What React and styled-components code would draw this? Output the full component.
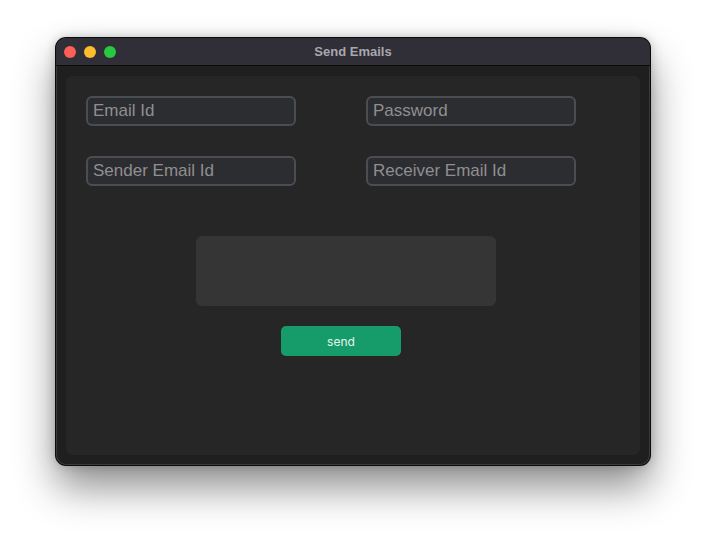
import React from "react";
import styled, { createGlobalStyle } from "styled-components";

const Global = createGlobalStyle`
  html, body { margin: 0; padding: 0; background: #ffffff; }
  body { font-family: "Liberation Sans", Arial, sans-serif; }
`;

const Page = styled.div`
  width: 706px;
  height: 539px;
  display: flex;
  justify-content: center;
  align-items: flex-start;
  padding-top: 38px;
  box-sizing: border-box;
`;

const Window = styled.div`
  width: 594px;
  height: 427px;
  border-radius: 10px;
  background: #1f1f1f;
  box-shadow: 0 0 0 1px #0a0a0a, inset 0 0 0 1px #3a3a3c, 0 22px 40px rgba(0, 0, 0, 0.45),
    0 0 12px rgba(0, 0, 0, 0.25);
  overflow: hidden;
  display: flex;
  flex-direction: column;
  box-sizing: border-box;
`;

const TitleBar = styled.div`
  height: 27px;
  flex: none;
  background: #302e36;
  border-bottom: 1px solid #0c0c0c;
  display: flex;
  align-items: center;
  position: relative;
  padding-left: 8px;
  gap: 8px;
`;

const Light = styled.span`
  width: 12px;
  height: 12px;
  border-radius: 50%;
  background: ${(p) => p.$c};
`;

const Title = styled.div`
  position: absolute;
  left: 0;
  right: 0;
  text-align: center;
  font-family: "Liberation Sans", Arial, sans-serif;
  font-weight: bold;
  font-size: 13px;
  color: #a8a7ad;
  pointer-events: none;
`;

const Body = styled.div`
  flex: 1;
  padding: 10px;
  display: flex;
`;

const Panel = styled.div`
  flex: 1;
  background: #262626;
  border-radius: 6px;
  padding: 20px;
  box-sizing: border-box;
  display: flex;
  flex-direction: column;
  align-items: flex-start;
`;

const Grid = styled.div`
  display: grid;
  grid-template-columns: 210px 210px;
  column-gap: 70px;
  row-gap: 30px;
`;

const Input = styled.div`
  height: 30px;
  box-sizing: border-box;
  border: 2px solid #4a4d51;
  border-radius: 6px;
  background: #2c2d30;
  color: #8f8f91;
  font-family: "Liberation Sans", Arial, sans-serif;
  font-size: 17px;
  display: flex;
  align-items: center;
  padding-left: 5px;
`;

const TextArea = styled.div`
  width: 300px;
  height: 70px;
  margin-top: 50px;
  margin-left: 110px;
  background: #353535;
  border-radius: 6px;
`;

const Button = styled.button`
  width: 120px;
  height: 30px;
  margin-top: 20px;
  margin-left: 195px;
  border: none;
  border-radius: 5px;
  background: #159c6a;
  color: #e6f3ee;
  font-family: "Inter", "Liberation Sans", sans-serif;
  font-size: 12px;
  padding: 0;
  cursor: pointer;
`;

export default function App() {
  return (
    <>
      <Global />
      <Page>
        <Window>
          <TitleBar>
            <Light $c="#fe5f57" />
            <Light $c="#febc2e" />
            <Light $c="#28c840" />
            <Title>Send Emails</Title>
          </TitleBar>
          <Body>
            <Panel>
              <Grid>
                <Input>Email Id</Input>
                <Input>Password</Input>
                <Input>Sender Email Id</Input>
                <Input>Receiver Email Id</Input>
              </Grid>
              <TextArea />
              <Button>send</Button>
            </Panel>
          </Body>
        </Window>
      </Page>
    </>
  );
}
